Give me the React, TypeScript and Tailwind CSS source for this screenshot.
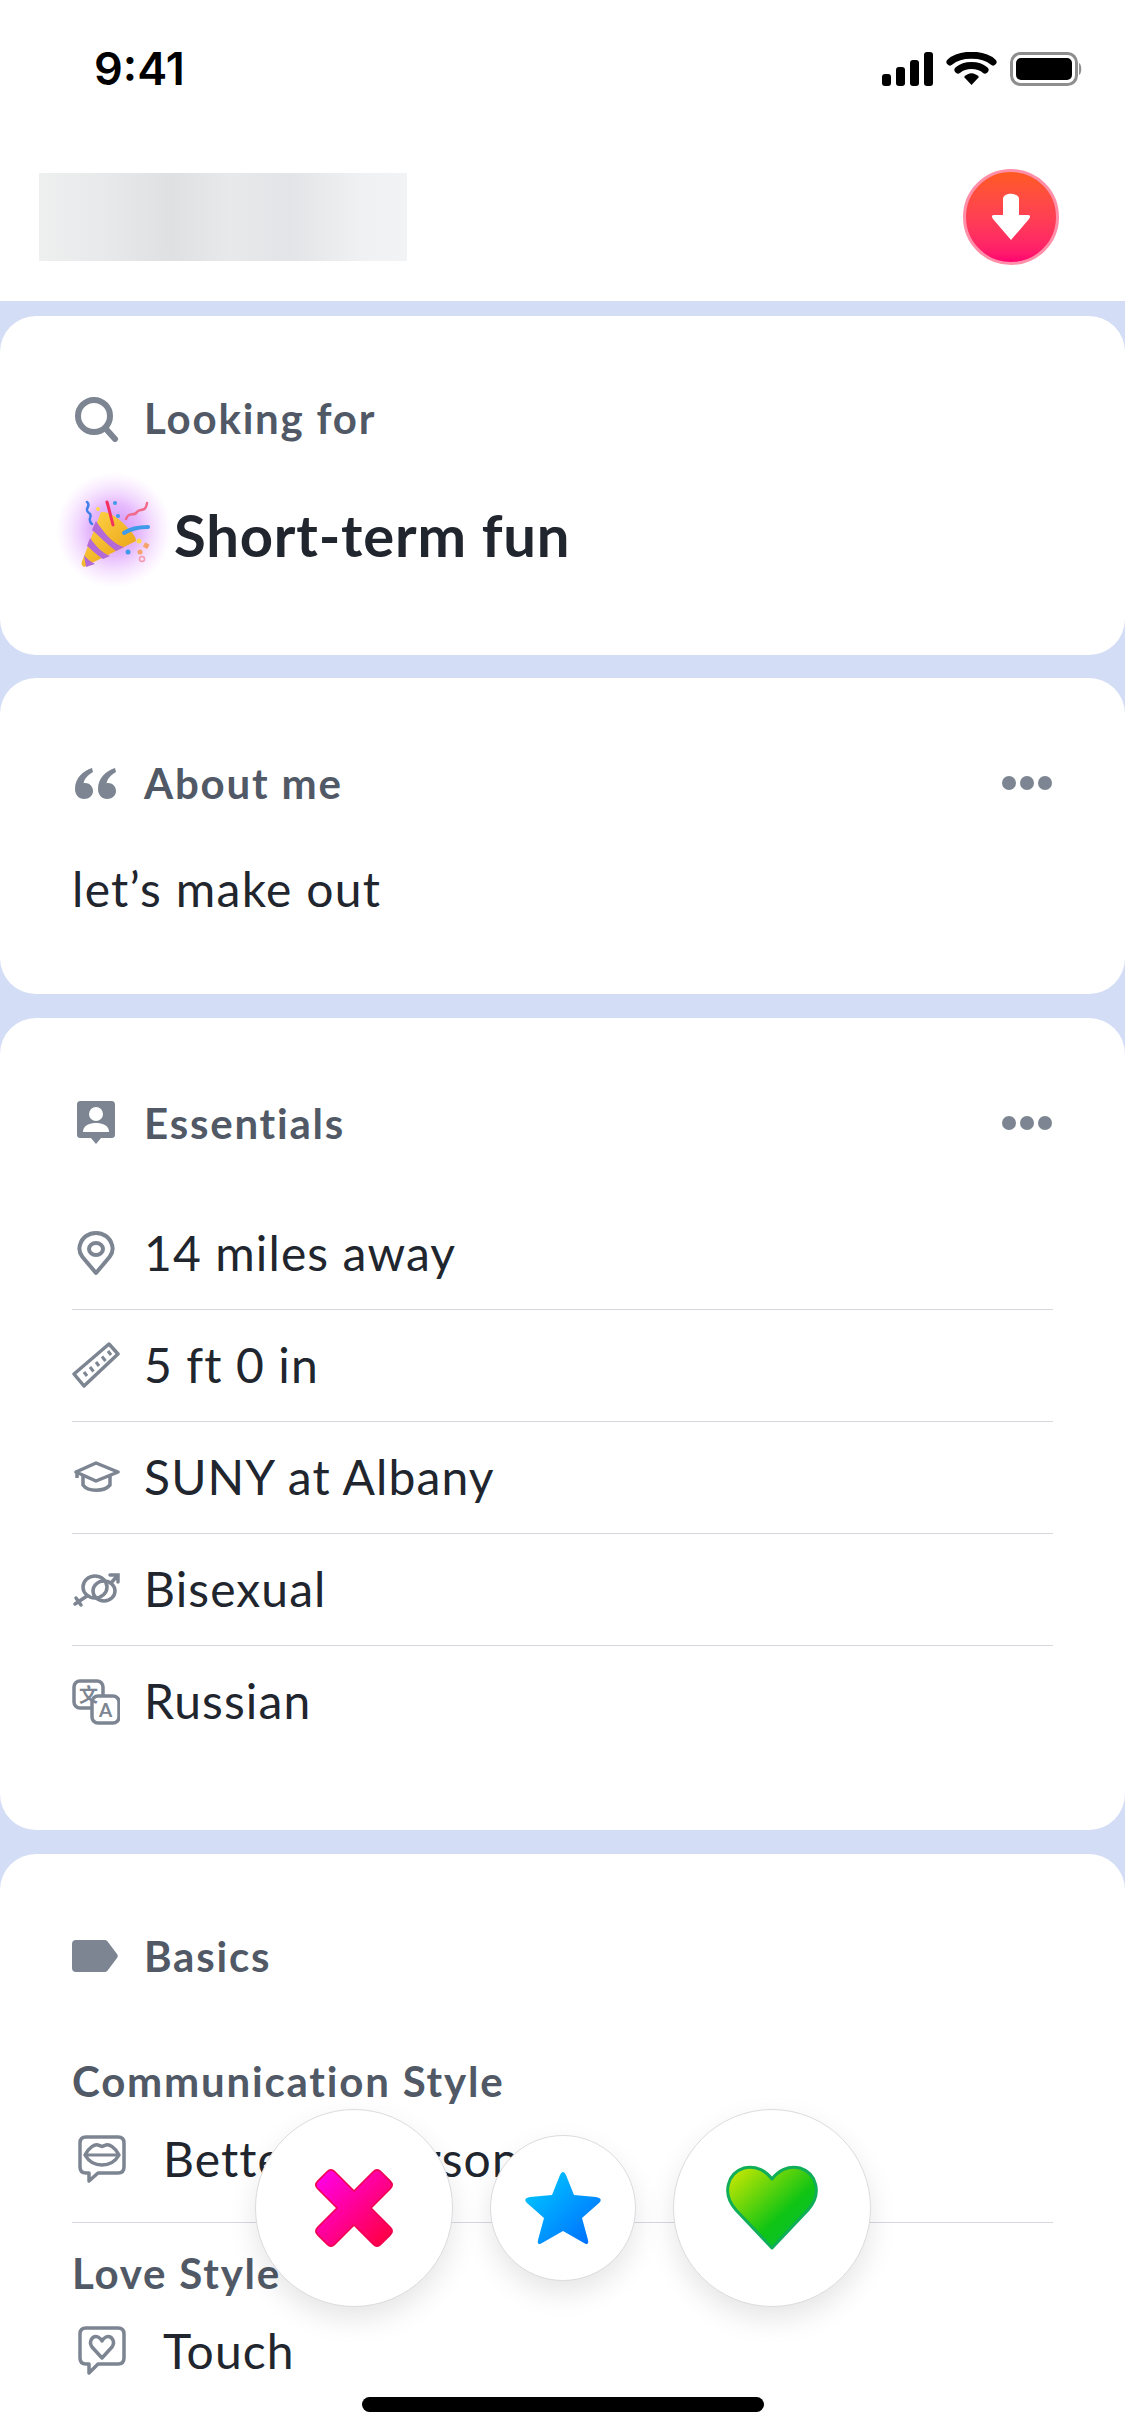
import React from 'react';

const FONT = "font-['Lato','Noto_Sans',sans-serif]";

const StatusIcons = () => (
  <svg width="200" height="34" viewBox="0 0 200 34">
    {/* signal */}
    <rect x="0" y="22" width="9" height="12" rx="3" fill="#000" />
    <rect x="14" y="15" width="9" height="19" rx="3" fill="#000" />
    <rect x="28" y="8" width="9" height="26" rx="3" fill="#000" />
    <rect x="42" y="0" width="9" height="34" rx="3" fill="#000" />
    {/* wifi */}
    <path d="M68 10 C78 1 101 1 111 10" fill="none" stroke="#000" strokeWidth="7" strokeLinecap="round" />
    <path d="M76 18 C83 12 96 12 103 18" fill="none" stroke="#000" strokeWidth="7" strokeLinecap="round" />
    <path d="M82 25 C87 20 92 20 97 25 L89.5 33 Z" fill="#000" />
    {/* battery */}
    <rect x="129.5" y="1.5" width="65" height="31" rx="9" fill="none" stroke="#8e8e8e" strokeWidth="3" />
    <rect x="134" y="6" width="56" height="22" rx="5" fill="#000" />
    <path d="M197 11 C200 12 200 22 197 23 Z" fill="#8e8e8e" />
  </svg>
);

const DownloadButton = () => (
  <div className="flex h-[96px] w-[96px] items-center justify-center rounded-full border-[3px] border-[#ff8fa8] bg-gradient-to-b from-[#ff5a1f] to-[#ff0070]">
    <svg width="40" height="48" viewBox="0 0 40 48">
      <path d="M20 47 L2 26 C0 23 1 22 4 22 H12 V6 C12 -1 28 -1 28 6 V22 H36 C39 22 40 23 38 26 Z" fill="#fff" />
    </svg>
  </div>
);

const SearchIcon = () => (
  <svg width="48" height="48" viewBox="0 0 48 48" fill="none" stroke="#7c8591" strokeWidth="6" strokeLinecap="round">
    <circle cx="22" cy="22" r="16" />
    <path d="M34 35 L43 45" />
  </svg>
);

const QuoteIcon = () => (
  <svg width="48" height="48" viewBox="0 0 48 48" fill="#7c8591">
    <path d="M20 9 C11 12 3 19 3 30 C3 36 7 40 12 40 C17 40 21 36.5 21 32 C21 27.500 17.500 24 13 24 C12.500 24 12 24 11.500 24.200 C12.500 20 15.500 16 21 13 Z" />
    <path d="M43 9 C34 12 26 19 26 30 C26 36 30 40 35 40 C40 40 44 36.5 44 32 C44 27.500 40.500 24 36 24 C35.500 24 35 24 34.500 24.200 C35.500 20 38.500 16 44 13 Z" />
  </svg>
);

const PersonIcon = () => (
  <svg width="48" height="48" viewBox="0 0 48 48">
    <path d="M9 2 H39 C42 2 43 3 43 6 V35 C43 38 42 39 39 39 H29 L24 45 L19 39 H9 C6 39 5 38 5 35 V6 C5 3 6 2 9 2 Z" fill="#7c8591" />
    <circle cx="24" cy="15" r="7" fill="#fff" />
    <path d="M11 33 C11 26 18 24 24 24 C30 24 37 26 37 33 Z" fill="#fff" />
  </svg>
);

const TagIcon = () => (
  <svg width="48" height="48" viewBox="0 0 48 48">
    <path d="M4 8 H32 C34 8 35 8.500 36 10 L45 22 C46 23.500 46 24.500 45 26 L36 38 C35 39.500 34 40 32 40 H4 C1.500 40 0 38.500 0 36 V12 C0 9.500 1.500 8 4 8 Z" fill="#7c8591" />
  </svg>
);

const PinIcon = () => (
  <svg width="48" height="48" viewBox="0 0 48 48" fill="none" stroke="#7c8591" strokeWidth="4" strokeLinejoin="round">
    <path d="M24 44 L10.500 28 C7 23.500 7 19 8 16 C10 8 17 4 24 4 C31 4 38 8 40 16 C41 19 41 23.500 37.500 28 Z" />
    <ellipse cx="24" cy="20" rx="7" ry="6" />
  </svg>
);

const RulerIcon = () => (
  <svg width="48" height="48" viewBox="0 0 48 48" fill="none" stroke="#7c8591" strokeWidth="3.500" strokeLinejoin="round">
    <path d="M2 33 L37 3 L46 13 L12 45 Z" />
    <path d="M12 31 L15 35 M18 26 L21.500 30.500 M24 21 L27 25 M30 15.500 L33.500 20 M36 10 L39 14" strokeWidth="3" />
  </svg>
);

const CapIcon = () => (
  <svg width="48" height="48" viewBox="0 0 48 48" fill="none" stroke="#7c8591" strokeWidth="3.500" strokeLinejoin="round">
    <path d="M4 19 L24 10 L46 19 L24 28 Z" />
    <path d="M11 23 V32 C16 39 32 39 38 32 V23" />
    <path d="M5 19 V25" />
  </svg>
);

const GenderIcon = () => (
  <svg width="48" height="48" viewBox="0 0 48 48" fill="none" stroke="#7c8591" strokeWidth="3.500" strokeLinecap="round">
    <ellipse cx="23" cy="22" rx="12" ry="11" />
    <ellipse cx="32" cy="26" rx="11" ry="10" />
    <path d="M15 31 L3 39 M4 33 L9 40" />
    <path d="M39 18 L46 10 M38 10 H46 V17" />
  </svg>
);

const TranslateIcon = () => (
  <svg width="48" height="48" viewBox="0 0 48 48">
    <rect x="2" y="4" width="29" height="27" rx="6" fill="#fff" stroke="#7c8591" strokeWidth="3.500" />
    <rect x="20" y="19" width="27" height="27" rx="6" fill="#fff" stroke="#7c8591" strokeWidth="3.500" />
    <text x="16.500" y="25" textAnchor="middle" fontSize="19" fontWeight="700" fill="#7c8591" fontFamily="'Noto Sans CJK SC', sans-serif">文</text>
    <text x="33.500" y="40" textAnchor="middle" fontSize="19" fontWeight="700" fill="#7c8591" fontFamily="'Lato', sans-serif">A</text>
  </svg>
);

const LipsIcon = () => (
  <svg width="48" height="48" viewBox="0 0 48 48" fill="none" stroke="#7c8591" strokeWidth="3.500" strokeLinejoin="round">
    <path d="M8 2 H40 C44 2 46 4 46 8 V32 C46 36 44 38 40 38 H20 L11 46 V38 H8 C4 38 2 36 2 32 V8 C2 4 4 2 8 2 Z" />
    <path d="M7 20 C11 12 17 9 20 10 C22 10.500 23 11.500 24 11.500 C25 11.500 26 10.500 28 10 C31 9 37 12 41 20 C37 27 30 30 24 30 C18 30 11 27 7 20 Z" />
    <path d="M7 20 H41" strokeWidth="3" />
  </svg>
);

const HeartBubbleIcon = () => (
  <svg width="48" height="50" viewBox="0 0 48 50" fill="none" stroke="#7c8591" strokeWidth="3.500" strokeLinejoin="round">
    <path d="M8 2 H40 C44 2 46 4 46 8 V32 C46 36 44 38 40 38 H20 L11 47 V38 H8 C4 38 2 36 2 32 V8 C2 4 4 2 8 2 Z" />
    <path d="M24 32 L14 21 C10 15 15 9 20 11 C22 12 23 13 24 15 C25 13 26 12 28 11 C33 9 38 15 34 21 Z" />
  </svg>
);

const PartyPopper = () => (
  <svg width="102" height="120" viewBox="0 0 102 120" className="shrink-0 overflow-visible">
    <defs>
      <radialGradient id="glow">
        <stop offset="0%" stopColor="#c77dfa" stopOpacity="0.9" />
        <stop offset="45%" stopColor="#d58cfb" stopOpacity="0.6" />
        <stop offset="100%" stopColor="#eebdff" stopOpacity="0" />
      </radialGradient>
      <linearGradient id="cone" x1="0" y1="0" x2="1" y2="1">
        <stop offset="0%" stopColor="#ffd84a" />
        <stop offset="100%" stopColor="#e99b10" />
      </linearGradient>
    </defs>
    <circle cx="52" cy="55" r="58" fill="url(#glow)" />
    <path d="M22 92 C19 90 19 88 21 84 L39 37 C46 36 56 42 64 51 C70 57 74 62 74 66 Z" fill="url(#cone)" />
    <path d="M34 46 C42 58 52 70 62 72 L54 76 C46 70 36 60 30 55 Z" fill="#b469d8" />
    <path d="M28 63 C34 71 40 78 48 81 L41 84 C35 80 29 74 25 71 Z" fill="#b469d8" />
    <path d="M22 80 C25 84 29 87 33 89 L24 92 Z" fill="#b469d8" />
    <path d="M45 27 C47 34 49 42 51 50" fill="none" stroke="#f5305f" strokeWidth="3" strokeLinecap="round" />
    <path d="M25 27 C30 31 21 34 27 38 C32 41 24 44 30 49" fill="none" stroke="#3f80ea" strokeWidth="2.500" strokeLinecap="round" />
    <path d="M64 44 C67 36 72 42 75 37 C77 33 84 38 85 28" fill="none" stroke="#f06a8c" strokeWidth="2.500" strokeLinecap="round" />
    <path d="M62 58 C68 54 77 52 86 52" fill="none" stroke="#3f9aea" strokeWidth="4" strokeLinecap="round" />
    <circle cx="53" cy="28" r="2" fill="#3f9aea" />
    <circle cx="56" cy="41" r="2" fill="#3f9aea" />
    <circle cx="36" cy="34" r="2" fill="#ffd84a" />
    <circle cx="77" cy="66" r="2.500" fill="#ffd84a" />
    <circle cx="66" cy="77" r="2.500" fill="#3f9aea" />
    <circle cx="78" cy="77" r="2.500" fill="#f7a26a" />
    <rect x="82" y="68" width="5" height="5" fill="#f7a26a" transform="rotate(30 84 70)" />
    <circle cx="80" cy="84" r="2.500" fill="none" stroke="#f59ab0" strokeWidth="1.500" />
  </svg>
);

const Dots = () => (
  <div className="flex items-center gap-[4px]">
    <span className="h-[14px] w-[14px] rounded-full bg-[#7c8591]" />
    <span className="h-[14px] w-[14px] rounded-full bg-[#7c8591]" />
    <span className="h-[14px] w-[14px] rounded-full bg-[#7c8591]" />
  </div>
);

const CardHeader = ({ icon, title, more }: { icon: React.ReactNode; title: string; more?: boolean }) => (
  <div className="flex h-[56px] items-center">
    <div className="flex w-[72px] shrink-0 items-center">{icon}</div>
    <span className="text-[42px] font-bold leading-none tracking-[1.8px] text-[#505965]">{title}</span>
    {more && (
      <div className="ml-auto mr-[1px]">
        <Dots />
      </div>
    )}
  </div>
);

const EssentialRow = ({ icon, label, last }: { icon: React.ReactNode; label: string; last?: boolean }) => (
  <div className={`flex h-[112px] items-center pb-[2px] ${last ? '' : 'border-b border-[#d5d8dd]'}`}>
    <div className="flex w-[72px] shrink-0 items-center">{icon}</div>
    <span className="text-[48px] leading-none tracking-[1.1px] text-[#21262e]">{label}</span>
  </div>
);

const ActionButton = ({ size, children }: { size: string; children: React.ReactNode }) => (
  <div className={`flex items-center justify-center rounded-full border border-[#dcdce0] bg-white shadow-[0_12px_28px_rgba(0,0,0,0.1)] ${size}`}>
    {children}
  </div>
);

export default function App() {
  return (
    <div className={`relative h-[2436px] w-[1125px] overflow-hidden bg-[#d3ddf5] ${FONT}`}>
      {/* Header */}
      <header className="h-[301px] bg-white">
        <div className="flex h-[92px] items-end justify-between pl-[94px] pr-[43px]">
          <span className="flex h-[48px] items-center font-['Inter',sans-serif] text-[45px] font-semibold leading-none text-black">9:41</span>
          <div className="mb-[6px]">
            <StatusIcons />
          </div>
        </div>
        <div className="mt-[77px] flex items-center justify-between pl-[39px] pr-[66px]">
          <div className="h-[88px] w-[368px] bg-[linear-gradient(90deg,#eeefef_0%,#e8e9ea_18%,#dee0e2_36%,#e8e9eb_52%,#e2e4e7_68%,#f0f1f2_88%,#f2f3f5_100%)]" />
          <DownloadButton />
        </div>
      </header>

      <main className="mt-[15px] flex flex-col gap-[23px]">
        {/* Looking for */}
        <section className="rounded-[36px] bg-white px-[72px] pb-[80px] pt-[74px]">
          <CardHeader icon={<SearchIcon />} title="Looking for" />
          <div className="mt-[49px] flex h-[80px] items-center gap-[10px]">
            <div className="-ml-[10px]">
              <PartyPopper />
            </div>
            <span className="text-[58px] font-bold leading-none tracking-[0.8px] text-[#21262e]">Short-term fun</span>
          </div>
        </section>

        {/* About me */}
        <section className="rounded-[36px] bg-white px-[72px] pb-[73px] pt-[77px]">
          <CardHeader icon={<QuoteIcon />} title="About me" more />
          <p className="mt-[46px] flex h-[64px] items-center text-[48px] leading-none tracking-[1.3px] text-[#21262e]">let’s make out</p>
        </section>

        {/* Essentials */}
        <section className="mt-px rounded-[36px] bg-white px-[72px] pb-[72px] pt-[77px]">
          <CardHeader icon={<PersonIcon />} title="Essentials" more />
          <div className="mt-[47px]">
            <EssentialRow icon={<PinIcon />} label="14 miles away" />
            <EssentialRow icon={<RulerIcon />} label="5 ft 0 in" />
            <EssentialRow icon={<CapIcon />} label="SUNY at Albany" />
            <EssentialRow icon={<GenderIcon />} label="Bisexual" />
            <EssentialRow icon={<TranslateIcon />} label="Russian" last />
          </div>
        </section>

        {/* Basics */}
        <section className="mt-px rounded-[36px] bg-white px-[72px] pb-[200px] pt-[74px]">
          <CardHeader icon={<TagIcon />} title="Basics" />
          <h3 className="mt-[72px] flex h-[50px] items-center text-[42px] font-bold leading-none tracking-[1.8px] text-[#505965]">Communication Style</h3>
          <div className="mt-[21px] flex h-[64px] items-center pl-[6px]">
            <div className="flex w-[85px] shrink-0 items-center">
              <LipsIcon />
            </div>
            <span className="text-[48px] leading-none tracking-[1.1px] text-[#21262e]">Better in person</span>
          </div>
          <div className="mt-[31px] border-b border-[#d5d8dd]" />
          <h3 className="mt-[25px] flex h-[50px] items-center text-[42px] font-bold leading-none tracking-[1.8px] text-[#505965]">Love Style</h3>
          <div className="mt-[21px] flex h-[64px] items-center pl-[6px]">
            <div className="flex w-[85px] shrink-0 items-center">
              <HeartBubbleIcon />
            </div>
            <span className="text-[48px] leading-none tracking-[1.1px] text-[#21262e]">Touch</span>
          </div>
        </section>
      </main>

      {/* Floating actions */}
      <div className="absolute left-[255px] top-[2109px] flex items-center gap-[37px]">
        <ActionButton size="h-[198px] w-[198px]">
          <svg width="90" height="90" viewBox="0 0 82 82">
            <defs>
              <linearGradient id="nope" x1="0" y1="0" x2="1" y2="1">
                <stop offset="0%" stopColor="#ff00f0" />
                <stop offset="100%" stopColor="#ff0038" />
              </linearGradient>
            </defs>
            <path d="M41 25.500 L58.500 8 Q62 4.500 65.500 8 L74 16.500 Q77.500 20 74 23.500 L56.500 41 L74 58.500 Q77.500 62 74 65.500 L65.500 74 Q62 77.500 58.500 74 L41 56.500 L23.500 74 Q20 77.500 16.500 74 L8 65.500 Q4.500 62 8 58.500 L25.500 41 L8 23.500 Q4.500 20 8 16.500 L16.500 8 Q20 4.500 23.500 8 Z" fill="url(#nope)" stroke="#f00050" strokeWidth="1.500" strokeLinejoin="round" />
          </svg>
        </ActionButton>
        <ActionButton size="h-[146px] w-[146px]">
          <svg width="80" height="76" viewBox="0 0 80 76">
            <defs>
              <linearGradient id="star" x1="0" y1="0" x2="1" y2="1">
                <stop offset="0%" stopColor="#00d0ff" />
                <stop offset="100%" stopColor="#0068ff" />
              </linearGradient>
            </defs>
            <path d="M40 2 C41 2 42 3 43 5 L51 25 L73 27 C78 28 79 30 76 33 L59 48 L65 70 C66 74 64 75 61 73 L40 61 L19 73 C16 75 14 74 15 70 L21 48 L4 33 C1 30 2 28 7 27 L29 25 L37 5 C38 3 39 2 40 2 Z" fill="url(#star)" />
          </svg>
        </ActionButton>
        <ActionButton size="h-[198px] w-[198px]">
          <svg width="96" height="86" viewBox="0 0 96 86">
            <defs>
              <linearGradient id="like" x1="0" y1="0" x2="1" y2="1">
                <stop offset="0%" stopColor="#d8ea00" />
                <stop offset="60%" stopColor="#10c414" />
                <stop offset="100%" stopColor="#00c040" />
              </linearGradient>
            </defs>
            <path d="M48 83 L12 45 C-3 28 4 8 20 3 C32 0 42 6 48 14 C54 6 64 0 76 3 C92 8 99 28 84 45 Z" fill="url(#like)" stroke="#10ae58" strokeWidth="3" strokeLinejoin="round" />
          </svg>
        </ActionButton>
      </div>

      {/* Home indicator */}
      <div className="absolute left-[362px] top-[2397px] h-[15px] w-[402px] rounded-full bg-black" />
    </div>
  );
}
